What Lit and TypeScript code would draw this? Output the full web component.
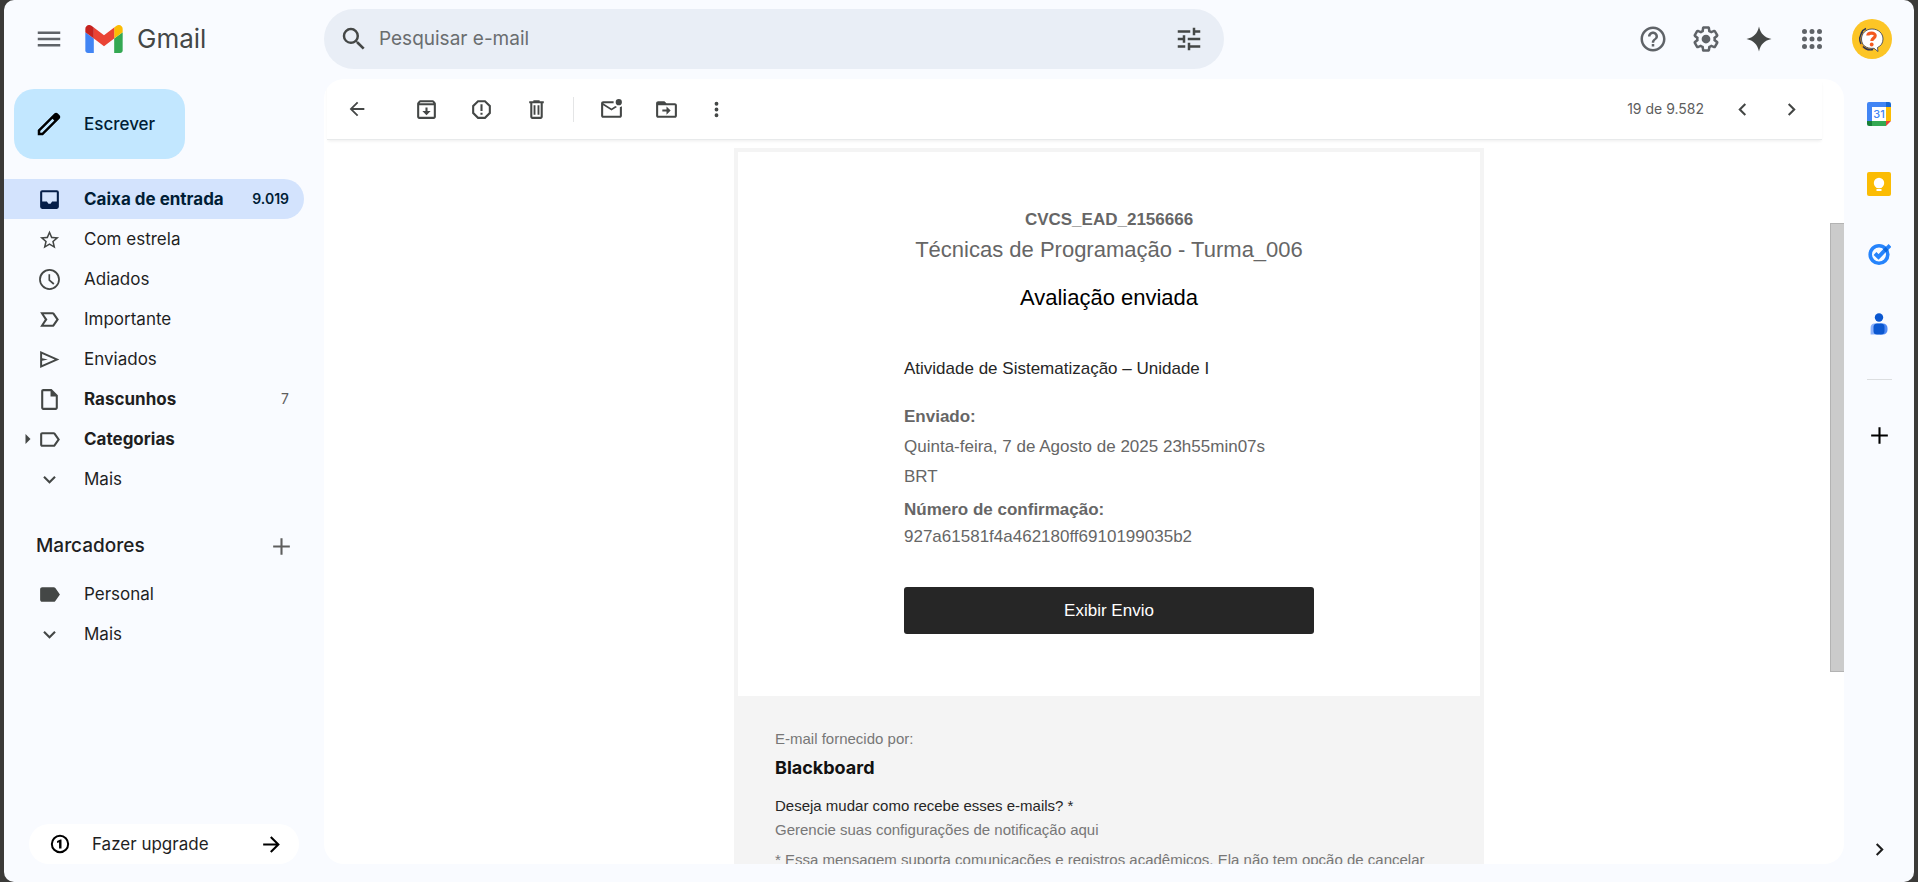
import { LitElement, html, css, nothing } from "lit";
import { customElement } from "lit/decorators.js";
import { classMap } from "lit/directives/class-map.js";

const ICONS: Record<string, string> = {
  menu: "M3 18h18v-2H3v2zm0-5h18v-2H3v2zm0-7v2h18V6H3z",
  search:
    "M15.5 14h-.79l-.28-.27A6.47 6.47 0 0 0 16 9.5 6.5 6.5 0 1 0 9.5 16c1.61 0 3.09-.59 4.23-1.57l.27.28v.79l5 4.99L20.49 19l-4.99-5zm-6 0C7.01 14 5 11.99 5 9.5S7.01 5 9.5 5 14 7.01 14 9.5 11.99 14 9.5 14z",
  tune: "M3 17v2h6v-2H3zM3 5v2h10V5H3zm10 16v-2h8v-2h-8v-2h-2v6h2zM7 9v2H3v2h4v2h2V9H7zm14 4v-2H11v2h10zm-6-4h2V7h4V5h-4V3h-2v6z",
  help: "M11 18h2v-2h-2v2zm1-16C6.48 2 2 6.48 2 12s4.48 10 10 10 10-4.48 10-10S17.52 2 12 2zm0 18c-4.41 0-8-3.59-8-8s3.59-8 8-8 8 3.59 8 8-3.59 8-8 8zm0-14c-2.21 0-4 1.79-4 4h2c0-1.1.9-2 2-2s2 .9 2 2c0 2-3 1.75-3 5h2c0-2.25 3-2.5 3-5 0-2.21-1.79-4-4-4z",
  settings:
    "M13.85 22.25h-3.7c-.74 0-1.36-.54-1.45-1.27l-.27-1.89c-.27-.14-.53-.29-.79-.46l-1.8.72c-.7.26-1.47-.03-1.81-.65L2.2 15.53c-.35-.66-.2-1.44.36-1.88l1.53-1.19c-.01-.15-.02-.3-.02-.46 0-.15.01-.31.02-.46l-1.52-1.19c-.59-.45-.74-1.26-.37-1.88l1.85-3.19c.34-.62 1.11-.9 1.79-.63l1.81.73c.26-.17.52-.32.78-.46l.27-1.91c.09-.7.71-1.25 1.44-1.25h3.7c.74 0 1.36.54 1.45 1.27l.27 1.89c.27.14.53.29.79.46l1.8-.72c.71-.26 1.48.03 1.82.65l1.84 3.18c.36.66.2 1.44-.36 1.88l-1.52 1.19c.01.15.02.3.02.46s-.01.31-.02.46l1.52 1.19c.56.45.72 1.23.37 1.86l-1.86 3.22c-.34.62-1.11.9-1.8.63l-1.8-.72c-.26.17-.52.32-.78.46l-.27 1.91c-.1.68-.72 1.22-1.46 1.22zm-3.23-2h2.76l.37-2.55.53-.22c.44-.18.88-.44 1.34-.78l.45-.34 2.38.96 1.38-2.4-2.03-1.58.07-.56c.03-.26.06-.51.06-.78s-.03-.53-.06-.78l-.07-.56 2.03-1.58-1.39-2.4-2.39.96-.45-.35c-.42-.32-.87-.58-1.33-.77l-.52-.22-.37-2.55h-2.76l-.37 2.55-.53.21c-.44.19-.88.44-1.34.79l-.45.33-2.38-.95-1.39 2.39 2.03 1.58-.07.56a7 7 0 0 0-.06.79c0 .26.02.53.06.78l.07.56-2.03 1.58 1.38 2.4 2.39-.96.45.35c.43.33.86.58 1.33.77l.53.22.38 2.55zM15.5 12a3.5 3.5 0 1 1-7 0 3.5 3.5 0 0 1 7 0z",
  sparkle: "M12 2c1.2 5.600 4.400 8.800 10 10-5.600 1.200-8.800 4.400-10 10-1.200-5.600-4.400-8.800-10-10 5.600-1.200 8.800-4.400 10-10z",
  apps: "M6 8a2 2 0 1 0 0-4 2 2 0 0 0 0 4zm6 12a2 2 0 1 0 0-4 2 2 0 0 0 0 4zm-6 0a2 2 0 1 0 0-4 2 2 0 0 0 0 4zm0-6a2 2 0 1 0 0-4 2 2 0 0 0 0 4zm6 0a2 2 0 1 0 0-4 2 2 0 0 0 0 4zm4-8a2 2 0 1 0 4 0 2 2 0 0 0-4 0zm-4 2a2 2 0 1 0 0-4 2 2 0 0 0 0 4zm6 6a2 2 0 1 0 0-4 2 2 0 0 0 0 4zm0 6a2 2 0 1 0 0-4 2 2 0 0 0 0 4z",
  pencil:
    "M20.41 4.94l-1.35-1.35c-.78-.78-2.05-.78-2.83 0L3 16.82V21h4.18L20.41 7.77c.79-.78.79-2.05 0-2.83zm-14 14.12L5 19v-1.36l9.82-9.82 1.41 1.41-9.82 9.83z",
  back: "M20 11H7.83l5.59-5.59L12 4l-8 8 8 8 1.41-1.41L7.83 13H20v-2z",
  forward: "M12 4l-1.41 1.41L16.17 11H4v2h12.17l-5.58 5.59L12 20l8-8z",
  archive:
    "M20.54 5.23l-1.39-1.68C18.88 3.21 18.47 3 18 3H6c-.47 0-.88.21-1.16.55L3.46 5.23C3.17 5.57 3 6.02 3 6.5V19c0 1.1.9 2 2 2h14c1.1 0 2-.9 2-2V6.5c0-.48-.17-.93-.46-1.27zM6.24 5h11.52l.83 1H5.42l.82-1zM5 19V8h14v11H5zm11-5.500l-4 4-4-4h3V10h2v3.500z",
  spam: "M15.73 3H8.27L3 8.27v7.46L8.27 21h7.46L21 15.73V8.27L15.73 3zM19 14.9L14.9 19H9.1L5 14.9V9.1L9.1 5h5.8L19 9.1v5.8zM11 7h2v6.500h-2zM11 15h2v2h-2z",
  trash: "M15 4V3H9v1H5v2h1v13c0 1.1.9 2 2 2h8c1.1 0 2-.9 2-2V6h1V4h-4zm1 15H8V6h8v13zM9.200 8H11v9H9.200zM13 8h1.800v9H13z",
  unread:
    "M22 8.98V18c0 1.1-.9 2-2 2H4c-1.1 0-2-.9-2-2V6c0-1.1.9-2 2-2h10.1c-.06.32-.1.66-.1 1s.04.68.1 1H4l8 5 3.67-2.29c.47.43 1.02.76 1.63.98L12 13 4 8v10h16V9.9c.74-.15 1.42-.48 2-.92zM16 5a3 3 0 1 0 6 0 3 3 0 0 0-6 0z",
  move: "M20 6h-8l-2-2H4c-1.1 0-2 .9-2 2v12c0 1.1.9 2 2 2h16c1.1 0 2-.9 2-2V8c0-1.1-.9-2-2-2zm0 12H4V8h16v10zM8 12h4V9l4 4-4 4v-3H8z",
  more: "M12 8a2 2 0 1 0 0-4 2 2 0 0 0 0 4zm0 2a2 2 0 1 0 0 4 2 2 0 0 0 0-4zm0 6a2 2 0 1 0 0 4 2 2 0 0 0 0-4z",
  prev: "M15.41 7.41L14 6l-6 6 6 6 1.41-1.41L10.83 12z",
  next: "M10 6L8.59 7.41 13.17 12l-4.58 4.59L10 18l6-6z",
  inbox: "M19 3H5a2 2 0 0 0-2 2v14a2 2 0 0 0 2 2h14a2 2 0 0 0 2-2V5a2 2 0 0 0-2-2zm0 11h-4.500l-1.500 2h-2l-1.500-2H5V5h14v9z",
  star: "M22 9.74l-7.19-.62L12 2.5 9.19 9.13 2 9.74l5.46 4.73-1.64 7.03L12 17.77l6.18 3.73-1.63-7.03L22 9.74zM12 15.9l-3.76 2.27 1-4.28-3.32-2.88 4.38-.38L12 6.6l1.71 4.04 4.38.38-3.32 2.88 1 4.28L12 15.9z",
  clock:
    "M12 2C6.48 2 2 6.48 2 12s4.48 10 10 10 10-4.48 10-10S17.52 2 12 2zm0 18.3a8.3 8.3 0 1 1 0-16.6 8.3 8.3 0 0 1 0 16.6zM12.6 7H11v6l4.6 4 1.1-1.3-4.1-3.5z",
  important:
    "M15 19H3l4.5-7L3 5h12c.65 0 1.26.31 1.63.84L21 12l-4.37 6.16c-.37.52-.98.84-1.63.84zm-8.5-2H15l3.5-5L15 7H6.5l3.5 5-3.5 5z",
  send: "M3 20.200v-16.400L21.500 12 3 20.200zM4.900 17.300L17 12 4.900 6.700v4L10.500 12l-5.600 1.300z",
  draft: "M14 2H6c-1.1 0-2 .9-2 2v16c0 1.1.9 2 2 2h12c1.1 0 2-.9 2-2V8l-6-6zM6 20V4h7v5h5v11H6z",
  label:
    "M17.63 5.84C17.27 5.33 16.67 5 16 5L5 5.01C3.9 5.01 3 5.9 3 7v10c0 1.1.9 1.99 2 1.99L16 19c.67 0 1.27-.33 1.63-.84L22 12l-4.37-6.16zM16 17H5V7h11l3.55 5L16 17z",
  labelFill:
    "M17.63 5.84C17.27 5.33 16.67 5 16 5L5 5.01C3.9 5.01 3 5.9 3 7v10c0 1.1.9 1.99 2 1.99L16 19c.67 0 1.27-.33 1.63-.84L22 12l-4.37-6.16z",
  down: "M16.59 8.59L12 13.17 7.41 8.59 6 10l6 6 6-6z",
  caret: "M7 2l10 10L7 22z",
  plus: "M20 13h-7v7h-2v-7H4v-2h7V4h2v7h7v2z",
  one: "M12 1a11 11 0 1 0 0 22 11 11 0 0 0 0-22zm0 19.6a8.6 8.6 0 1 1 0-17.2 8.6 8.6 0 0 1 0 17.2zM13.8 6.500v11h-2.900V10l-2.400.8V8.400l4-1.900z",
};

const icon = (name: string, size = 25) =>
  html`<svg width=${size} height=${size} viewBox="0 0 24 24" fill="currentColor" aria-hidden="true">
    <path fill-rule="evenodd" d=${ICONS[name]}></path>
  </svg>`;

const gmailLogo = html`<svg width="38" height="28" viewBox="52 42 88 66" aria-hidden="true">
  <path fill="#4285f4" d="M58 108h14V74L52 59v43c0 3.320 2.690 6 6 6" />
  <path fill="#34a853" d="M120 108h14c3.320 0 6-2.690 6-6V59l-20 15" />
  <path fill="#fbbc04" d="M120 48v26l20-15v-8c0-7.420-8.470-11.650-14.400-7.200" />
  <path fill="#ea4335" d="M72 74V48l24 18 24-18v26L96 92" />
  <path fill="#c5221f" d="M52 51v8l20 15V48l-5.600-4.200c-5.940-4.450-14.400-.220-14.400 7.200" />
</svg>`;

const avatar = html`<svg width="40" height="40" viewBox="0 0 40 40" aria-hidden="true">
  <circle cx="20" cy="20" r="20" fill="#fcc526" />
  <ellipse cx="17.500" cy="21.500" rx="10.500" ry="10.500" fill="#f3ad22" />
  <path d="M10.500 13a11 11 0 0 0-1.500 12M14 9.500a9 9 0 0 0-5 5M11 27.500q4 4.500 10 3" fill="none" stroke="#2b3350" stroke-width="1.400" />
  <path d="M20 10c6.300 0 11 4.300 11 10 0 4-2 7-5.500 8.500l.500 4-4-3.200C14 30 9.500 26 9.500 20 9.500 14.300 14 10 20 10z" fill="#fff" stroke="#2b3350" stroke-width=".8" />
  <path d="M15.800 16.500c.2-3 7.500-3.400 7.400.300-.1 2.500-3.300 2.200-3.400 5.200" fill="none" stroke="#f4591f" stroke-width="3.200" />
  <circle cx="19.700" cy="25.500" r="1.900" fill="#f4591f" />
</svg>`;

const calendar = html`<svg width="24" height="24" viewBox="0 0 24 24" aria-hidden="true">
  <path fill="#fff" d="M5 5h14v14H5z" />
  <path fill="#4285f4" d="M2 0h17v5H5v14H0V2a2 2 0 0 1 2-2z" />
  <path fill="#1967d2" d="M19 0h3a2 2 0 0 1 2 2v3h-5z" />
  <path fill="#fbbc04" d="M19 5h5v14h-5z" />
  <path fill="#34a853" d="M5 19h14v5H5z" />
  <path fill="#188038" d="M0 19h5v5H2a2 2 0 0 1-2-2z" />
  <path fill="#ea4335" d="M19 19h5l-5 5z" />
  <text x="12" y="16" text-anchor="middle" font-family="Inter, sans-serif" font-size="11" font-weight="500" fill="#4285f4">31</text>
</svg>`;

const keep = html`<svg width="24" height="24" viewBox="0 0 24 24" aria-hidden="true">
  <rect width="24" height="24" rx="2" fill="#fbbc04" />
  <circle cx="12" cy="11" r="5.200" fill="#fff" />
  <path fill="#fff" d="M9.500 14h5v2h-5zM9.500 17h5v2h-5z" />
</svg>`;

const tasks = html`<svg width="24" height="24" viewBox="0 0 24 24" aria-hidden="true">
  <circle cx="12" cy="12.500" r="8.800" fill="none" stroke="#2684fc" stroke-width="3.600" />
  <path d="M8 11.500l3.500 3.500 7.500-8" fill="none" stroke="#2684fc" stroke-width="4" />
  <path d="M17.500 9l2.800-2.800" fill="none" stroke="#0b66da" stroke-width="4" />
  <path d="M20.300 6.200l2.700-2.700" fill="none" stroke="#2684fc" stroke-width="4" />
</svg>`;

const contacts = html`<svg width="24" height="24" viewBox="0 0 24 24" aria-hidden="true">
  <circle cx="12" cy="5.500" r="4.200" fill="#0b57d0" />
  <path fill="#8ab0fb" d="M7 11.500h6v11H3.600V16A4.500 4.500 0 0 1 7 11.500z" />
  <path fill="#4f8af5" d="M13 11.500h3a4.500 4.500 0 0 1 4.500 4.500v2a4.500 4.500 0 0 1-4.500 4.500h-3z" />
  <rect x="6.500" y="11.500" width="11" height="11" rx="3.500" fill="#0b57d0" />
</svg>`;

interface Folder {
  icon: string;
  text: string;
  count?: string;
  bold?: boolean;
  active?: boolean;
  caret?: boolean;
  size?: number;
}

const FOLDERS: Folder[] = [
  { icon: "inbox", text: "Caixa de entrada", count: "9.019", bold: true, active: true },
  { icon: "star", text: "Com estrela", size: 23 },
  { icon: "clock", text: "Adiados" },
  { icon: "important", text: "Importante" },
  { icon: "send", text: "Enviados" },
  { icon: "draft", text: "Rascunhos", count: "7", bold: true },
  { icon: "label", text: "Categorias", bold: true, caret: true },
  { icon: "down", text: "Mais" },
];

const LABELS: Folder[] = [
  { icon: "labelFill", text: "Personal" },
  { icon: "down", text: "Mais" },
];

const reset = css`
  * {
    box-sizing: border-box;
  }
  button {
    font: inherit;
    color: inherit;
    background: none;
    border: 0;
    padding: 0;
    margin: 0;
    cursor: pointer;
    display: flex;
    align-items: center;
    justify-content: center;
  }
  a {
    color: inherit;
    text-decoration: none;
  }
  svg {
    display: block;
    flex: none;
  }
  h1,
  h2,
  p,
  dl,
  dt,
  dd {
    margin: 0;
    font-size: inherit;
    font-weight: inherit;
  }
`;

@customElement("mail-header")
export class MailHeader extends LitElement {
  static styles = [
    reset,
    css`
      :host {
        box-sizing: border-box;
        display: flex;
        align-items: center;
        height: 79px;
        padding-bottom: 1px;
        color: #5f6368;
      }
      .brand {
        width: 320px;
        flex: none;
        display: flex;
        align-items: center;
        padding-left: 30px;
      }
      .logo {
        display: flex;
        align-items: center;
        gap: 14px;
        margin-left: 21px;
        font-size: 26px;
        line-height: 32px;
        color: #444746;
      }
      .search {
        flex: 0 1 900px;
        height: 60px;
        border-radius: 30px;
        background: #e9eef6;
        display: flex;
        align-items: center;
        padding: 0 20px 0 15px;
        color: #444746;
      }
      .search input {
        flex: 1;
        min-width: 0;
        border: 0;
        outline: 0;
        background: none;
        padding: 0 0 0 10px;
        font: inherit;
        font-size: 19px;
        line-height: 24px;
      }
      .search input::placeholder {
        color: #6a6d6f;
        opacity: 1;
      }
      .tools {
        margin-left: auto;
        padding-right: 22px;
        display: flex;
        align-items: center;
      }
      .tool {
        width: 53px;
        height: 40px;
      }
      .dark {
        color: #444746;
      }
      .account {
        margin-left: 14px;
      }
    `,
  ];
  render() {
    return html`
      <div class="brand">
        <button aria-label="Menu principal">${icon("menu", 30)}</button>
        <a class="logo" href="#">${gmailLogo}<span>Gmail</span></a>
      </div>
      <form class="search" role="search">
        <button type="button" aria-label="Pesquisar">${icon("search", 30)}</button>
        <input type="text" aria-label="Pesquisar e-mail" placeholder="Pesquisar e-mail" />
        <button type="button" aria-label="Opções de pesquisa">${icon("tune", 30)}</button>
      </form>
      <div class="tools">
        <button class="tool" aria-label="Suporte">${icon("help", 30)}</button>
        <button class="tool" aria-label="Configurações">${icon("settings", 30)}</button>
        <button class="tool dark" aria-label="Gemini">${icon("sparkle", 30)}</button>
        <button class="tool" aria-label="Google Apps">${icon("apps", 30)}</button>
        <button class="account" aria-label="Conta">${avatar}</button>
      </div>
    `;
  }
}

@customElement("mail-sidebar")
export class MailSidebar extends LitElement {
  static styles = [
    reset,
    css`
      :host {
        box-sizing: border-box;
        display: flex;
        flex-direction: column;
        width: 320px;
        flex: none;
        padding: 10px 20px 18px 0;
        font-size: 17px;
        line-height: 24px;
        color: #1f1f1f;
      }
      .compose {
        align-self: flex-start;
        height: 70px;
        margin-left: 10px;
        padding: 0 30px 0 20px;
        gap: 20px;
        border-radius: 20px;
        background: #c2e7ff;
        color: #001d35;
        font-weight: 500;
      }
      .compose svg {
        color: #000;
      }
      nav {
        margin-top: 20px;
        display: flex;
        flex-direction: column;
      }
      .row {
        display: flex;
        align-items: center;
        height: 40px;
        padding: 0 15px 0 17px;
        border-radius: 0 20px 20px 0;
      }
      .caret {
        width: 13px;
        margin-right: 3px;
        display: flex;
        justify-content: center;
        color: #444746;
      }
      .glyph {
        width: 25px;
        margin-right: 22px;
        display: flex;
        justify-content: center;
        color: #444746;
      }
      .name {
        flex: 1;
        white-space: nowrap;
      }
      .count {
        font-size: 14px;
        color: #5e5e5e;
      }
      .bold .name {
        font-weight: 700;
      }
      .active {
        background: #d3e3fd;
        color: #001d35;
      }
      .active .glyph {
        color: #041e49;
      }
      .active .count {
        font-weight: 600;
        color: #001d35;
      }
      .head {
        display: flex;
        align-items: center;
        justify-content: space-between;
        height: 40px;
        margin-top: 27px;
        padding: 0 10px 0 32px;
        font-size: 19px;
        font-weight: 500;
      }
      .head button {
        color: #5e5e5e;
      }
      .labels {
        margin-top: 8px;
      }
      .upgrade {
        display: flex;
        align-items: center;
        height: 40px;
        margin: auto 5px 0 25px;
        padding: 0 15px 0 21px;
        gap: 22px;
        border-radius: 20px;
        background: #fff;
      }
      .upgrade svg {
        color: #000;
      }
    `,
  ];
  private row(f: Folder) {
    return html`<a class=${classMap({ row: true, bold: !!f.bold, active: !!f.active })} href="#">
      <span class="caret">${f.caret ? icon("caret", 12) : nothing}</span>
      <span class="glyph">${icon(f.icon, f.size ?? 25)}</span>
      <span class="name">${f.text}</span>
      ${f.count ? html`<span class="count">${f.count}</span>` : nothing}
    </a>`;
  }
  render() {
    return html`
      <button class="compose">${icon("pencil", 30)}<span>Escrever</span></button>
      <nav aria-label="Pastas">${FOLDERS.map((f) => this.row(f))}</nav>
      <div class="head">
        <h2>Marcadores</h2>
        <button aria-label="Criar novo marcador">${icon("plus", 25)}</button>
      </div>
      <nav class="labels" aria-label="Marcadores">${LABELS.map((f) => this.row(f))}</nav>
      <a class="upgrade" href="#">${icon("one", 20)}<span class="name">Fazer upgrade</span>${icon("forward", 25)}</a>
    `;
  }
}

@customElement("mail-toolbar")
export class MailToolbar extends LitElement {
  static styles = [
    reset,
    css`
      :host {
        box-sizing: border-box;
        display: flex;
        align-items: center;
        height: 60px;
        flex: none;
        margin: 0 22px 0 3px;
        padding: 0 6px 0 2px;
        color: #444746;
        box-shadow: 0 1px 0 #e8eaeb, 0 3px 3px -1px #ededed;
      }
      .btn {
        width: 55px;
        height: 40px;
      }
      .back {
        margin-right: 15px;
      }
      .rule {
        width: 1px;
        height: 25px;
        margin: 0 10px 0 9px;
        background: #e4e5e6;
      }
      .slim {
        width: 45px;
      }
      .pos {
        margin-left: auto;
        margin-right: 14px;
        font-size: 14px;
        line-height: 20px;
        color: #5e5e5e;
      }
      .page {
        width: 49px;
        height: 40px;
      }
    `,
  ];
  render() {
    return html`
      <button class="btn back" aria-label="Voltar">${icon("back", 22)}</button>
      <button class="btn" aria-label="Arquivar">${icon("archive")}</button>
      <button class="btn" aria-label="Denunciar spam">${icon("spam")}</button>
      <button class="btn" aria-label="Excluir">${icon("trash")}</button>
      <span class="rule"></span>
      <button class="btn" aria-label="Marcar como não lida">${icon("unread")}</button>
      <button class="btn" aria-label="Mover para">${icon("move")}</button>
      <button class="btn slim" aria-label="Mais">${icon("more", 23)}</button>
      <span class="pos">19 de 9.582</span>
      <button class="page" aria-label="Mais recente">${icon("prev")}</button>
      <button class="page" aria-label="Mais antiga">${icon("next")}</button>
    `;
  }
}

@customElement("mail-message")
export class MailMessage extends LitElement {
  static styles = [
    reset,
    css`
      :host {
        display: flex;
        flex: 1;
        min-height: 0;
        font-family: "Liberation Sans", Arial, sans-serif;
        font-size: 17px;
        line-height: 30px;
        color: #666;
      }
      .scroll {
        flex: 1;
        min-width: 0;
        overflow: hidden;
        padding: 9px 0 0 64px;
        display: flex;
        justify-content: center;
        align-items: flex-start;
      }
      .card {
        flex: 0 1 750px;
        border: 4px solid #f4f4f4;
      }
      .main {
        max-width: 410px;
        margin: 0 auto;
        padding: 53px 0 62px;
      }
      .course {
        display: flex;
        flex-direction: column;
        align-items: center;
        white-space: nowrap;
      }
      .code,
      dt {
        font-weight: 700;
      }
      .title {
        font-size: 22px;
      }
      .status {
        margin-top: 18px;
        font-size: 22px;
        color: #000;
      }
      .task {
        margin-top: 41px;
        color: #262626;
      }
      dl {
        margin-top: 18px;
      }
      .confirm {
        margin-top: 4px;
      }
      .confirm,
      .confirm-id {
        line-height: 27px;
      }
      .cta {
        display: block;
        margin-top: 37px;
        border-radius: 3px;
        background: #262626;
        color: #fff;
        line-height: 47px;
        text-align: center;
      }
      .foot {
        background: #f4f4f4;
        padding: 31px 37px 30px;
        font-size: 15px;
        line-height: 24px;
        color: #777;
      }
      .vendor {
        margin-top: 5px;
        font-family: Inter, sans-serif;
        font-size: 18px;
        font-weight: 700;
        color: #111;
      }
      .ask {
        margin-top: 14px;
        color: #262626;
      }
      .note {
        margin-top: 6px;
      }
      .track {
        width: 14px;
        flex: none;
        padding-top: 84px;
      }
      .thumb {
        height: 70%;
        min-height: 40px;
        background: #cbcbcb;
        border: 1px solid #b3b3b3;
        border-right: 0;
      }
    `,
  ];
  render() {
    return html`
      <div class="scroll">
        <article class="card">
          <div class="main">
            <header class="course">
              <p class="code">CVCS_EAD_2156666</p>
              <p class="title">Técnicas de Programação - Turma_006</p>
              <h1 class="status">Avaliação enviada</h1>
            </header>
            <p class="task">Atividade de Sistematização – Unidade I</p>
            <dl>
              <dt>Enviado:</dt>
              <dd>Quinta-feira, 7 de Agosto de 2025 23h55min07s<br />BRT</dd>
              <dt class="confirm">Número de confirmação:</dt>
              <dd class="confirm-id">927a61581f4a462180ff6910199035b2</dd>
            </dl>
            <a class="cta" href="#">Exibir Envio</a>
          </div>
          <footer class="foot">
            <p>E-mail fornecido por:</p>
            <p class="vendor">Blackboard</p>
            <p class="ask">Deseja mudar como recebe esses e-mails? *</p>
            <p><a href="#">Gerencie suas configurações de notificação aqui</a></p>
            <p class="note">* Essa mensagem suporta comunicações e registros acadêmicos. Ela não tem opção de cancelar</p>
          </footer>
        </article>
      </div>
      <div class="track"><div class="thumb"></div></div>
    `;
  }
}

@customElement("mail-rail")
export class MailRail extends LitElement {
  static styles = [
    reset,
    css`
      :host {
        width: 70px;
        flex: none;
        display: flex;
        flex-direction: column;
        align-items: center;
        color: #1f1f1f;
      }
      .app {
        width: 70px;
        height: 70px;
      }
      .rule {
        width: 25px;
        height: 1px;
        margin: 20px 0;
        background: #dcdee0;
      }
      .plus {
        color: #000;
      }
      .hide {
        margin-top: auto;
        margin-bottom: 20px;
      }
    `,
  ];
  render() {
    return html`
      <button class="app" aria-label="Agenda">${calendar}</button>
      <button class="app" aria-label="Keep">${keep}</button>
      <button class="app" aria-label="Tarefas">${tasks}</button>
      <button class="app" aria-label="Contatos">${contacts}</button>
      <span class="rule"></span>
      <button class="app plus" aria-label="Instalar complementos">${icon("plus")}</button>
      <button class="hide" aria-label="Ocultar painel lateral">${icon("next")}</button>
    `;
  }
}

@customElement("app-root")
export class AppRoot extends LitElement {
  static styles = [
    reset,
    css`
      :host {
        display: block;
        height: 100vh;
        padding: 0 4px;
        background: #3b3a38;
        font-family: Inter, Roboto, sans-serif;
        box-sizing: border-box;
      }
      .window {
        height: 100%;
        display: flex;
        flex-direction: column;
        background: #f9fbff;
        border-radius: 10px;
        overflow: hidden;
      }
      .body {
        flex: 1;
        min-height: 0;
        display: flex;
      }
      .panel {
        flex: 1;
        min-width: 0;
        display: flex;
        flex-direction: column;
        margin-bottom: 18px;
        border-radius: 20px;
        background: #fff;
        overflow: hidden;
      }
    `,
  ];
  render() {
    return html`
      <div class="window">
        <mail-header></mail-header>
        <div class="body">
          <mail-sidebar></mail-sidebar>
          <main class="panel">
            <mail-toolbar></mail-toolbar>
            <mail-message></mail-message>
          </main>
          <mail-rail></mail-rail>
        </div>
      </div>
    `;
  }
}
